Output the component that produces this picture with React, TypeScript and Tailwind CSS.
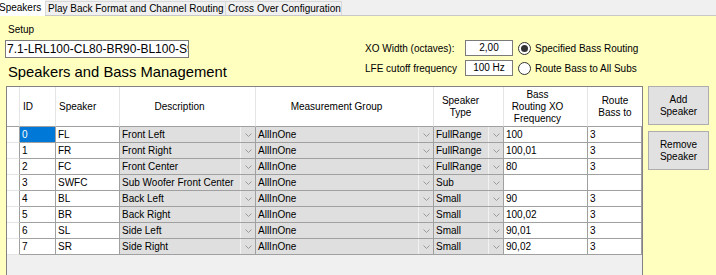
import React from "react";

type Row = {
  id: number;
  speaker: string;
  description: string;
  group: string;
  type: string;
  xo: string;
  route: string;
};

const rows: Row[] = [
  { id: 0, speaker: "FL", description: "Front Left", group: "AllInOne", type: "FullRange", xo: "100", route: "3" },
  { id: 1, speaker: "FR", description: "Front Right", group: "AllInOne", type: "FullRange", xo: "100,01", route: "3" },
  { id: 2, speaker: "FC", description: "Front Center", group: "AllInOne", type: "FullRange", xo: "80", route: "3" },
  { id: 3, speaker: "SWFC", description: "Sub Woofer Front Center", group: "AllInOne", type: "Sub", xo: "", route: "" },
  { id: 4, speaker: "BL", description: "Back Left", group: "AllInOne", type: "Small", xo: "90", route: "3" },
  { id: 5, speaker: "BR", description: "Back Right", group: "AllInOne", type: "Small", xo: "100,02", route: "3" },
  { id: 6, speaker: "SL", description: "Side Left", group: "AllInOne", type: "Small", xo: "90,01", route: "3" },
  { id: 7, speaker: "SR", description: "Side Right", group: "AllInOne", type: "Small", xo: "90,02", route: "3" },
];

const cols = "grid grid-cols-[13px_36px_64px_136px_178px_70px_84px_54px]";

function Chevron() {
  return (
    <svg width="7" height="4" viewBox="0 0 7 4" className="block">
      <polyline points="0.5,0.5 3.5,3.5 6.5,0.5" fill="none" stroke="#9a9a9a" strokeWidth="1" />
    </svg>
  );
}

function ComboCell({ text }: { text: string }) {
  return (
    <div className="flex h-full bg-[#dfdfdf] border-r border-b border-[#a0a0a0]">
      <div className="flex-1 pl-[2px] truncate leading-[15px]">{text}</div>
      <div className="w-[15px] border-l border-[#f2f2f2] flex items-center justify-center">
        <Chevron />
      </div>
    </div>
  );
}

function TextCell({ text, selected }: { text: string; selected?: boolean }) {
  return (
    <div
      className={`h-full border-r border-b border-[#a0a0a0] pl-[2px] leading-[15px] truncate ${
        selected ? "bg-[#0078d7] text-white" : "bg-white"
      }`}
    >
      {text}
    </div>
  );
}

function Radio({ checked }: { checked?: boolean }) {
  return (
    <div className="w-[13px] h-[13px] rounded-full border border-[#333] bg-white flex items-center justify-center">
      {checked && <div className="w-[7px] h-[7px] rounded-full bg-[#333]" />}
    </div>
  );
}

function HeaderCell({ children, left, last }: { children: React.ReactNode; left?: boolean; last?: boolean }) {
  return (
    <div
      className={`h-full bg-white border-b border-[#a0a0a0] flex items-center leading-[12px] ${
        last ? "" : "border-r border-r-[#e5e5e5]"
      } ${left ? "pl-[3px]" : last ? "justify-center text-center" : "justify-center text-center pr-[16px]"}`}
    >
      {children}
    </div>
  );
}

export default function App() {
  return (
    <div className="w-[716px] h-[275px] overflow-hidden bg-[#ffffc0] text-[10px] text-black font-['Liberation_Sans',Arial,sans-serif]">
      {/* tabs */}
      <div className="h-[16px] bg-[#f0f0f0] border-b border-[#c8c8c8] flex items-end">
        <div className="w-[45px] h-[16px] bg-white -mb-[1px] flex items-center overflow-hidden">
          <span className="-ml-[1px] leading-[12px] pb-[1px]">Speakers</span>
        </div>
        <div className="w-[181px] h-[14px] border border-b-0 border-[#d9d9d9] flex items-center pl-[2px] leading-[12px]">
          Play Back Format and Channel Routing
        </div>
        <div className="w-[116px] h-[14px] border border-l-0 border-b-0 border-[#d9d9d9] flex items-center pl-[2px] leading-[12px]">
          Cross Over Configuration
        </div>
      </div>

      {/* top settings */}
      <div className="flex h-[70px]">
        <div className="w-[360px]">
          <div className="pl-[8px] pt-[8px] leading-[12px]">Setup</div>
          <div className="ml-[5px] mt-[4px] w-[184px] h-[18px] bg-white border border-[#7a7a7a] pl-[1px] text-[12px] leading-[16px] overflow-hidden whitespace-nowrap">
            7.1-LRL100-CL80-BR90-BL100-S9
          </div>
          <div className="pl-[8px] mt-[5px] text-[14.8px] leading-[18px]">Speakers and Bass Management</div>
        </div>
        <div className="pt-[24px] pl-[5px] flex flex-col gap-[4px]">
          <div className="flex items-center h-[16px]">
            <div className="w-[100px]">XO Width (octaves):</div>
            <div className="w-[48px] h-[16px] bg-white border border-[#7a7a7a] text-center leading-[14px]">2,00</div>
            <div className="ml-[5px]">
              <Radio checked />
            </div>
            <div className="ml-[4px]">Specified Bass Routing</div>
          </div>
          <div className="flex items-center h-[16px]">
            <div className="w-[100px]">LFE cutoff frequency</div>
            <div className="w-[48px] h-[16px] bg-white border border-[#7a7a7a] text-center leading-[14px]">100 Hz</div>
            <div className="ml-[5px]">
              <Radio />
            </div>
            <div className="ml-[4px]">Route Bass to All Subs</div>
          </div>
        </div>
      </div>

      {/* grid and buttons */}
      <div className="flex items-start pl-[6px]">
        <div className="w-[637px] h-[220px] border border-[#828282] bg-[#f0f0f0]">
          <div className={`${cols} h-[40px]`}>
            <HeaderCell left>{""}</HeaderCell>
            <HeaderCell left>ID</HeaderCell>
            <HeaderCell left>Speaker</HeaderCell>
            <HeaderCell>Description</HeaderCell>
            <HeaderCell>Measurement Group</HeaderCell>
            <HeaderCell>
              Speaker
              <br />
              Type
            </HeaderCell>
            <HeaderCell>
              Bass
              <br />
              Routing XO
              <br />
              Frequency
            </HeaderCell>
            <HeaderCell last>
              Route
              <br />
              Bass to
            </HeaderCell>
          </div>
          {rows.map((r) => (
            <div key={r.id} className={`${cols} h-[16px]`}>
              <div className="h-full bg-white border-r border-b border-[#e5e5e5] border-r-[#a0a0a0]" />
              <TextCell text={String(r.id)} selected={r.id === 0} />
              <TextCell text={r.speaker} />
              <ComboCell text={r.description} />
              <ComboCell text={r.group} />
              <ComboCell text={r.type} />
              <TextCell text={r.xo} />
              <TextCell text={r.route} />
            </div>
          ))}
        </div>
        <div className="ml-[5px] flex flex-col gap-[6px]">
          <button className="w-[61px] h-[39px] bg-[#e1e1e1] border border-[#adadad] leading-[12px] text-center">
            Add
            <br />
            Speaker
          </button>
          <button className="w-[61px] h-[39px] bg-[#e1e1e1] border border-[#adadad] leading-[12px] text-center">
            Remove
            <br />
            Speaker
          </button>
        </div>
      </div>
    </div>
  );
}
